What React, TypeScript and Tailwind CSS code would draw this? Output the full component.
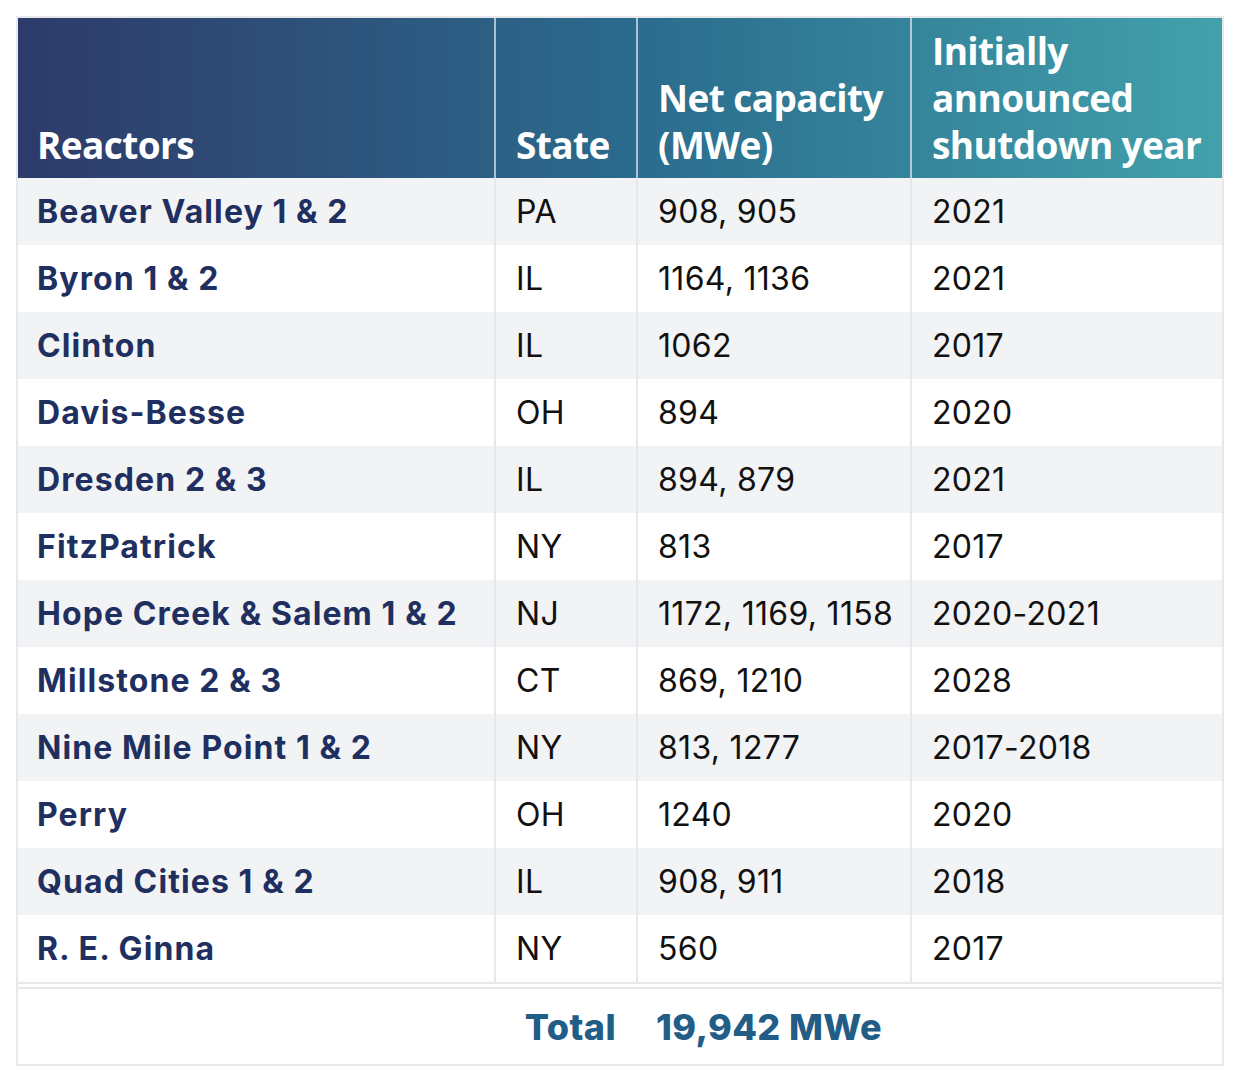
const rows = [
  ['Beaver Valley 1 & 2', 'PA', '908, 905', '2021'],
  ['Byron 1 & 2', 'IL', '1164, 1136', '2021'],
  ['Clinton', 'IL', '1062', '2017'],
  ['Davis-Besse', 'OH', '894', '2020'],
  ['Dresden 2 & 3', 'IL', '894, 879', '2021'],
  ['FitzPatrick', 'NY', '813', '2017'],
  ['Hope Creek & Salem 1 & 2', 'NJ', '1172, 1169, 1158', '2020-2021'],
  ['Millstone 2 & 3', 'CT', '869, 1210', '2028'],
  ['Nine Mile Point 1 & 2', 'NY', '813, 1277', '2017-2018'],
  ['Perry', 'OH', '1240', '2020'],
  ['Quad Cities 1 & 2', 'IL', '908, 911', '2018'],
  ['R. E. Ginna', 'NY', '560', '2017'],
];

const cols = 'grid grid-cols-[476px_142px_274px_1fr]';

export default function App() {
  return (
    <div className="min-h-screen bg-white p-4 font-['Inter',sans-serif]">
      <div className="w-[1208px] border-2 border-[#e6e8eb]">
        <div className={`${cols} h-[160px] whitespace-nowrap bg-gradient-to-r from-[#2d3a6a] via-[#2a6a8c] to-[#42a1ab] text-[37px] font-bold leading-[47px] tracking-[-0.6px] text-white font-['Open_Sans',sans-serif]`}>
          <div className="flex items-end px-[19px] pb-[10px]">Reactors</div>
          <div className="flex items-end border-l-2 border-[#e6e8eb]/70 px-5 pb-[10px]">State</div>
          <div className="flex items-end border-l-2 border-[#e6e8eb]/70 px-5 pb-[10px]">
            <span>
              Net capacity
              <br />
              (MWe)
            </span>
          </div>
          <div className="flex items-end border-l-2 border-[#e6e8eb]/70 px-5 pb-[10px]">
            <span>
              Initially
              <br />
              announced
              <br />
              shutdown year
            </span>
          </div>
        </div>
        {rows.map((r, i) => (
          <div
            key={r[0]}
            className={`${cols} h-[67px] whitespace-nowrap text-[32px] tracking-[0.3px] text-[#111] ${i % 2 === 0 ? 'bg-[#f2f3f5]' : 'bg-white'}`}
          >
            <div className="flex items-center px-[19px] text-[32px] font-bold tracking-[1.1px] text-[#1f2f5f]">{r[0]}</div>
            <div className="flex items-center border-l-2 border-[#e6e8eb] px-5">{r[1]}</div>
            <div className="flex items-center border-l-2 border-[#e6e8eb] px-5">{r[2]}</div>
            <div className="flex items-center border-l-2 border-[#e6e8eb] px-5">{r[3]}</div>
          </div>
        ))}
        <div className="border-b-2 border-[#e6e8eb]" />
        <div className="h-[3px] bg-white" />
        <div className={`${cols} h-[77px] whitespace-nowrap border-t-2 border-[#e6e8eb] text-[36px] font-extrabold tracking-[0.4px] text-[#215d87]`}>
          <div className="col-span-2 flex items-center justify-end px-5">Total</div>
          <div className="col-span-2 flex items-center px-5">19,942 MWe</div>
        </div>
      </div>
    </div>
  );
}
